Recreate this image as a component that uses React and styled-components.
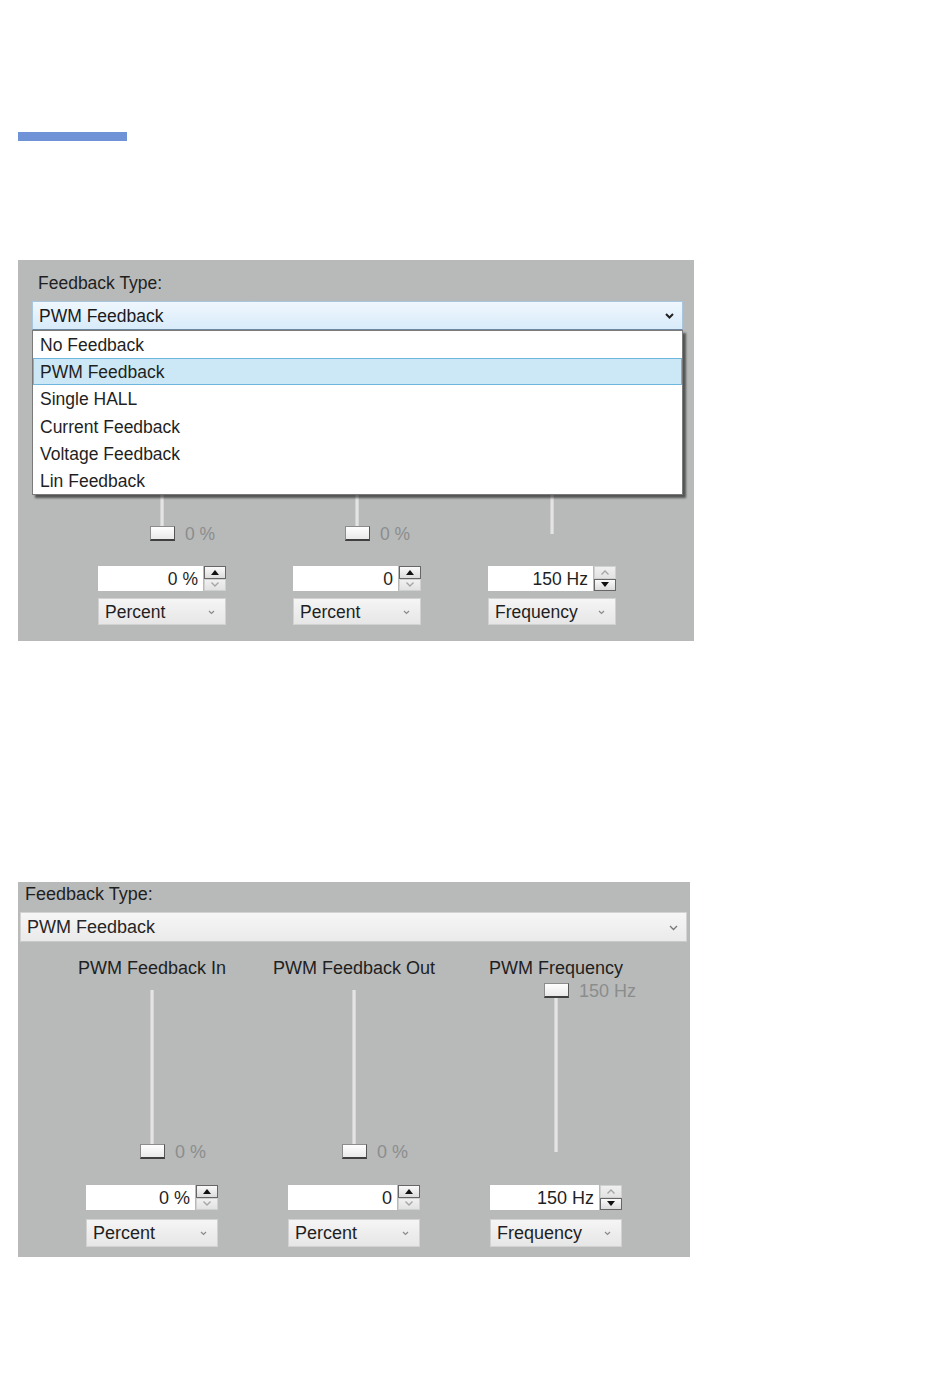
import React from 'react';
import styled, { createGlobalStyle } from 'styled-components';

const GlobalStyle = createGlobalStyle`
  html, body { margin: 0; padding: 0; background: #fff; }
  body {
    font-family: 'Liberation Sans', Arial, sans-serif;
    color: #1f1f1f;
  }
  * { box-sizing: border-box; }
`;

const Page = styled.div`
  width: 950px;
  min-height: 1392px;
  padding: 132px 0 0 18px;
  display: flex;
  flex-direction: column;
  align-items: flex-start;
`;

const Accent = styled.div`
  width: 109px;
  height: 9px;
  background: #7093d7;
  margin-bottom: 119px;
`;

const Panel = styled.section`
  width: ${p => p.$d.width}px;
  padding: ${p => p.$d.pad};
  margin-bottom: ${p => p.$d.mb}px;
  background: #b8baba;
  font-size: ${p => p.$d.fs}px;
`;

const Caption = styled.div`
  height: 20px;
  line-height: 20px;
  padding-left: ${p => p.$indent}px;
  margin-bottom: 8px;
  white-space: nowrap;
`;

const SelectWrap = styled.div`
  position: relative;
  z-index: 2;
`;

const SelectBox = styled.div`
  height: ${p => p.$h}px;
  display: flex;
  align-items: center;
  justify-content: space-between;
  padding: 1px 8px 0 6px;
  border: 1px solid ${p => (p.$open ? '#a9c6df' : '#d3d3d3')};
  border-bottom-color: ${p => (p.$open ? '#6e879c' : '#c9c9c9')};
  background: ${p => (p.$open
    ? 'linear-gradient(#f0f7fd, #d8ebfa)'
    : 'linear-gradient(#f6f6f6, #eaeaea)')};
  color: ${p => (p.$open ? '#1a1a1a' : '#262626')};
`;

const Chevron = styled.svg`
  width: 9px;
  height: 6px;
  flex: none;
`;

const Menu = styled.ul`
  position: absolute;
  top: 100%;
  left: 0;
  right: 0;
  margin: 0;
  padding: 0;
  list-style: none;
  background: #fff;
  border: 1px solid #7a7a7a;
  box-shadow: 3px 3px 2px rgba(0, 0, 0, 0.55);
`;

const MenuItem = styled.li`
  height: 27.2px;
  display: flex;
  align-items: center;
  padding: 2px 0 0 6px;
  border: 1px solid ${p => (p.$active ? '#6fb6de' : 'transparent')};
  background: ${p => (p.$active ? '#cce8f7' : 'transparent')};
  white-space: nowrap;
`;

const Columns = styled.div`
  display: grid;
  grid-template-columns: repeat(3, ${p => p.$d.colW}px);
  column-gap: ${p => p.$d.gap}px;
  padding-left: 66px;
`;

const Column = styled.div`
  display: flex;
  flex-direction: column;
  align-items: stretch;
`;

/* headings and top marks sit under the open menu in the first panel */
const Heading = styled.div`
  margin-top: 16px;
  height: 20px;
  line-height: 20px;
  display: flex;
  justify-content: center;
  white-space: nowrap;
  visibility: ${p => (p.$covered ? 'hidden' : 'visible')};
`;

const SliderBox = styled.div`
  position: relative;
  margin-top: 5px;
  height: ${p => p.$h}px;
`;

const Track = styled.div`
  position: absolute;
  left: calc(50% - 2px);
  top: 7px;
  bottom: 8px;
  width: 4px;
  background: #e4e4e4;
  border-left: 1px solid #d2d2d2;
  border-right: 1px solid #d6d6d6;
`;

const Thumb = styled.div`
  position: absolute;
  left: calc(50% - 12px);
  width: 25px;
  height: 15px;
  border: 1px solid #8c8c8c;
  border-right-color: #555;
  border-bottom: 2px solid #3f3f3f;
  background: linear-gradient(#fefefe, #e9e9e9);
`;

const Mark = styled.div`
  position: absolute;
  left: calc(50% + 23px);
  height: 15px;
  line-height: 16px;
  color: #8b8d8d;
  white-space: nowrap;
  visibility: ${p => (p.$covered ? 'hidden' : 'visible')};
`;

const SpinRow = styled.div`
  margin-top: ${p => p.$mt}px;
  height: ${p => p.$h}px;
  display: flex;
  gap: 1px;
`;

const NumberField = styled.div`
  flex: 1;
  background: #fff;
  display: flex;
  align-items: center;
  justify-content: flex-end;
  padding: 1px 5px 0 0;
  white-space: nowrap;
`;

const Spinner = styled.div`
  width: 22px;
  display: flex;
  flex-direction: column;
`;

const SpinButton = styled.div`
  flex: 1;
  display: flex;
  align-items: center;
  justify-content: center;
  border: 1px solid ${p => (p.$on ? '#666' : '#cfd0d0')};
  background: ${p => (p.$on
    ? 'linear-gradient(#fafafa, #dcdcdc)'
    : 'linear-gradient(#f0f0f0, #e2e2e2)')};
`;

const Unit = styled.div`
  margin-top: ${p => p.$mt}px;
  height: ${p => p.$h}px;
  display: flex;
  align-items: center;
  justify-content: space-between;
  padding: 1px 10px 0 6px;
  border: 1px solid #d2d2d2;
  background: linear-gradient(#f5f5f5, #e6e6e6);
`;

const options = [
  'No Feedback',
  'PWM Feedback',
  'Single HALL',
  'Current Feedback',
  'Voltage Feedback',
  'Lin Feedback',
];

const channels = [
  { title: 'PWM Feedback In', value: 0, mark: '0 %', field: '0 %', unit: 'Percent', spin: 'up' },
  { title: 'PWM Feedback Out', value: 0, mark: '0 %', field: '0', unit: 'Percent', spin: 'up' },
  { title: 'PWM Frequency', value: 1, mark: '150 Hz', field: '150 Hz', unit: 'Frequency', spin: 'down' },
];

const openPanel = {
  width: 676, pad: '13px 11px 16px 14px', mb: 241, fs: 17.5, indent: 6,
  selectH: 29, sliderH: 171, fieldMt: 24, fieldH: 25, unitMt: 7, unitH: 27,
  colW: 128, gap: 67,
};

const closedPanel = {
  width: 672, pad: '2px 3px 10px 2px', mb: 0, fs: 18, indent: 5,
  selectH: 30, sliderH: 177, fieldMt: 25, fieldH: 25, unitMt: 9, unitH: 28,
  colW: 132, gap: 70,
};

function Arrow({ dir, on }) {
  const pts = dir === 'up' ? '0,5 4,0 8,5' : '0,0 4,5 8,0';
  return (
    <svg width="8" height="5" viewBox="0 0 8 5">
      {on
        ? <polygon points={pts} fill="#111" />
        : <polyline points={dir === 'up' ? '0.5,4.5 4,1 7.5,4.5' : '0.5,0.5 4,4 7.5,0.5'}
            fill="none" stroke="#a4a6a6" strokeWidth="1.4" />}
    </svg>
  );
}

function SelectChevron({ bold }) {
  return (
    <Chevron viewBox="0 0 9 6">
      <polyline points="1,1 4.5,4.5 8,1" fill="none"
        stroke={bold ? '#222' : '#777'} strokeWidth={bold ? 2 : 1.3} />
    </Chevron>
  );
}

function SmallChevron() {
  return (
    <svg width="7" height="5" viewBox="0 0 7 5">
      <polyline points="1,1 3.5,3.5 6,1" fill="none" stroke="#8a8a8a" strokeWidth="1.2" />
    </svg>
  );
}

function Channel({ c, d, covered }) {
  const top = (1 - c.value) * (d.sliderH - 16);
  return (
    <Column>
      <Heading $covered={covered}>{c.title}</Heading>
      <SliderBox $h={d.sliderH}>
        <Track />
        <Thumb style={{ top }} />
        <Mark style={{ top }} $covered={covered && c.value > 0.5}>{c.mark}</Mark>
      </SliderBox>
      <SpinRow $mt={d.fieldMt} $h={d.fieldH}>
        <NumberField>{c.field}</NumberField>
        <Spinner>
          <SpinButton $on={c.spin === 'up'}><Arrow dir="up" on={c.spin === 'up'} /></SpinButton>
          <SpinButton $on={c.spin === 'down'}><Arrow dir="down" on={c.spin === 'down'} /></SpinButton>
        </Spinner>
      </SpinRow>
      <Unit $mt={d.unitMt} $h={d.unitH}>
        {c.unit}
        <SmallChevron />
      </Unit>
    </Column>
  );
}

function FeedbackPanel({ d, open }) {
  return (
    <Panel $d={d}>
      <Caption $indent={d.indent}>Feedback Type:</Caption>
      <SelectWrap>
        <SelectBox $h={d.selectH} $open={open}>
          PWM Feedback
          <SelectChevron bold={open} />
        </SelectBox>
        {open && (
          <Menu>
            {options.map(o => (
              <MenuItem key={o} $active={o === 'PWM Feedback'}>{o}</MenuItem>
            ))}
          </Menu>
        )}
      </SelectWrap>
      <Columns $d={d}>
        {channels.map(c => <Channel key={c.title} c={c} d={d} covered={open} />)}
      </Columns>
    </Panel>
  );
}

export default function App() {
  return (
    <>
      <GlobalStyle />
      <Page>
        <Accent />
        <FeedbackPanel d={openPanel} open />
        <FeedbackPanel d={closedPanel} />
      </Page>
    </>
  );
}
